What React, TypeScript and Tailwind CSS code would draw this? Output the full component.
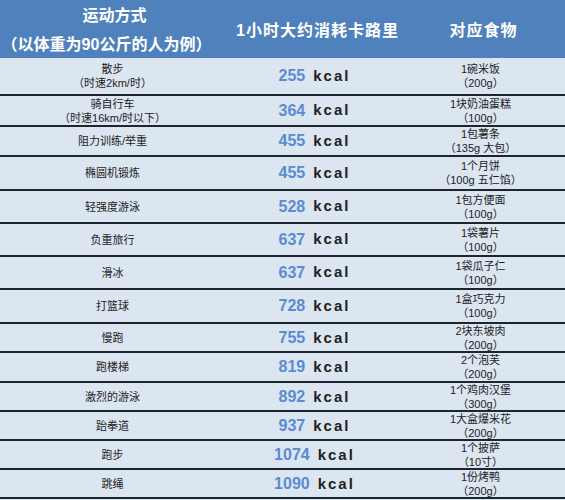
import React from "react";

type Row = {
  name: string[];
  kcal: string;
  food: string[];
  h: string;
};

const rows: Row[] = [
  { name: ["散步", "（时速2km/时）"], kcal: "255", food: ["1碗米饭", "（200g）"], h: "h-[38px]" },
  { name: ["骑自行车", "（时速16km/时以下）"], kcal: "364", food: ["1块奶油蛋糕", "（100g）"], h: "h-[31px]" },
  { name: ["阻力训练/举重"], kcal: "455", food: ["1包薯条", "（135g 大包）"], h: "h-[30px]" },
  { name: ["椭圆机锻炼"], kcal: "455", food: ["1个月饼", "（100g 五仁馅）"], h: "h-[34px]" },
  { name: ["轻强度游泳"], kcal: "528", food: ["1包方便面", "（100g）"], h: "h-[33px]" },
  { name: ["负重旅行"], kcal: "637", food: ["1袋薯片", "（100g）"], h: "h-[33px]" },
  { name: ["滑冰"], kcal: "637", food: ["1袋瓜子仁", "（100g）"], h: "h-[33px]" },
  { name: ["打篮球"], kcal: "728", food: ["1盒巧克力", "（100g）"], h: "h-[34px]" },
  { name: ["慢跑"], kcal: "755", food: ["2块东坡肉", "（200g）"], h: "h-[29px]" },
  { name: ["跑楼梯"], kcal: "819", food: ["2个泡芙", "（200g）"], h: "h-[30px]" },
  { name: ["激烈的游泳"], kcal: "892", food: ["1个鸡肉汉堡", "（300g）"], h: "h-[29px]" },
  { name: ["跆拳道"], kcal: "937", food: ["1大盒爆米花", "（200g）"], h: "h-[29px]" },
  { name: ["跑步"], kcal: "1074", food: ["1个披萨", "（10寸）"], h: "h-[29px]" },
  { name: ["跳绳"], kcal: "1090", food: ["1份烤鸭", "（200g）"], h: "h-[29px]" },
];

export default function App() {
  return (
    <div className="w-[565px] h-[500px] overflow-hidden bg-[#dce6f1] font-['Liberation_Sans','Noto_Sans_CJK_SC',sans-serif]">
      {/* header */}
      <div className="grid grid-cols-[225px_185px_1fr] h-[58px] bg-[#4f81bd] text-white font-bold">
        <div className="flex flex-col items-center justify-center gap-[9px] text-[16px] leading-[20px] pt-[2px]">
          <div className="pl-[4px]">运动方式</div>
          <div className="whitespace-nowrap pr-[12px]">（以体重为90公斤的人为例）</div>
        </div>
        <div className="flex items-center justify-center text-[16px] tracking-[1px] pt-[4px]">
          1小时大约消耗卡路里
        </div>
        <div className="flex items-center justify-center text-[16px] tracking-[1px] pt-[4px] pr-[8px]">
          对应食物
        </div>
      </div>

      {rows.map((r, i) => (
        <div
          key={i}
          className={`grid grid-cols-[225px_185px_1fr] ${r.h} border-b-2 border-[#1c2630] text-[#222]`}
        >
          <div className="flex flex-col items-center justify-center text-[11px] leading-[14px]">
            {r.name.map((t, j) => (
              <div key={j}>{t}</div>
            ))}
          </div>
          <div className="flex items-center justify-center pr-[6px]">
            <span className="text-[16px] font-bold text-[#5b8bd0]">{r.kcal}</span>
            <span className="ml-[8px] text-[15px] font-bold tracking-[2px] text-[#222]">kcal</span>
          </div>
          <div className="flex flex-col items-center justify-center text-[11px] leading-[14px] pr-[14px]">
            {r.food.map((t, j) => (
              <div key={j}>{t}</div>
            ))}
          </div>
        </div>
      ))}
    </div>
  );
}
